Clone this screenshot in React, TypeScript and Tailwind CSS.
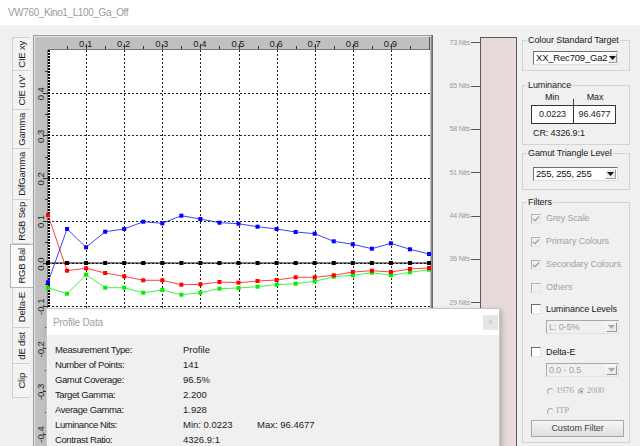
import React from "react";

const BLUE = [282.3, 229, 247.3, 231.7, 229, 221.7, 223.3, 215.7, 219, 222.7, 223.7, 226.7, 229, 232, 233.7, 241.3, 244.3, 248.7, 243.3, 249.3, 254];
const RED = [215, 270.7, 268.3, 273, 276.3, 280.3, 280.3, 284.7, 284.3, 282, 282.7, 281, 280, 277.3, 277.3, 275.3, 272, 270.7, 272, 269, 268];
const GREEN = [287.7, 293.7, 274.7, 287.7, 287.7, 292.7, 290, 294.7, 292.7, 288.7, 288, 286.7, 284.7, 283.7, 281.3, 276.7, 275.3, 272.7, 275.3, 272.3, 269.7];
const BLACK = Array.from({ length: 21 }, () => 263);

const X0 = 15;
const XS = 381;
const xOf = (v: number) => X0 + v * XS;
const yOf = (v: number) => 228.1 - v * 426;
const cr = (n: number) => Math.round(n) + 0.5;

function Chart() {
  const series: [number[], string][] = [
    [BLACK, "#000000"],
    [GREEN, "#00f000"],
    [RED, "#ff0000"],
    [BLUE, "#0000ff"],
  ];
  const hVals = [0.4, 0.3, 0.2, 0.1, 0, -0.1, -0.2, -0.3, -0.4];
  const leftTicks = Array.from({ length: 18 }, (_, i) => 0.45 - i * 0.05);
  return (
    <svg width={400} height={411} className="block shrink-0" style={{ fontFamily: '"Liberation Sans", Arial, sans-serif' }}>
      <rect x={0} y={0} width={400} height={411} fill="#c0c0c0" />
      <line x1={0.5} y1={0} x2={0.5} y2={411} stroke="#9a9a9a" />
      <line x1={0} y1={0.5} x2={400} y2={0.5} stroke="#9a9a9a" />
      <line x1={1.5} y1={1} x2={1.5} y2={411} stroke="#e6e6e6" />
      <line x1={1} y1={1.5} x2={400} y2={1.5} stroke="#e6e6e6" />
      <rect x={15} y={15} width={382} height={396} fill="#ffffff" />
      <line x1={15} y1={14.5} x2={397} y2={14.5} stroke="#7a7a7a" />
      <line x1={14.5} y1={15} x2={14.5} y2={411} stroke="#7a7a7a" />
      <line x1={396.5} y1={2} x2={396.5} y2={15} stroke="#555" />
      <line x1={398.5} y1={0} x2={398.5} y2={411} stroke="#8a8a8a" />
      <line x1={399.5} y1={0} x2={399.5} y2={411} stroke="#6a6a6a" />

      {Array.from({ length: 19 }, (_, k) => {
        const i = k + 1;
        const x = cr(xOf(i * 0.05));
        const major = i % 2 === 0;
        return <line key={"tt" + i} x1={x} y1={major ? 9 : 11} x2={x} y2={14} stroke="#333" />;
      })}
      {Array.from({ length: 9 }, (_, k) => (
        <text key={"tl" + k} x={xOf((k + 1) / 10) - 0.5} y={12} fontSize={9.5} fill="#222" textAnchor="middle">
          {"0." + (k + 1)}
        </text>
      ))}

      {leftTicks.map((v, i) => {
        const y = cr(yOf(v));
        const major = Math.round(v * 100) % 10 === 0;
        return <line key={"lt" + i} x1={major ? 10 : 12} y1={y} x2={15} y2={y} stroke="#333" />;
      })}
      {hVals.map((v) => (
        <text
          key={"ll" + v}
          transform={`translate(8, ${yOf(v) + 1}) rotate(-90)`}
          fontSize={9.5}
          fill="#222"
          textAnchor="middle"
          dy="0.35em"
        >
          {v.toFixed(1)}
        </text>
      ))}

      {Array.from({ length: 9 }, (_, k) => {
        const x = cr(xOf((k + 1) / 10));
        return <line key={"vg" + k} x1={x} y1={15} x2={x} y2={411} stroke="#222" strokeDasharray="2 2" shapeRendering="crispEdges" />;
      })}
      {hVals.map((v) => {
        const y = cr(yOf(v));
        return <line key={"hg" + v} x1={15} y1={y} x2={397} y2={y} stroke="#222" strokeDasharray="2 2" shapeRendering="crispEdges" />;
      })}
      <line x1={16} y1={15} x2={16} y2={411} stroke="#000" strokeWidth={2} strokeDasharray="2 1" shapeRendering="crispEdges" />

      {series.map(([data, color], si) => {
        const pts = data.map((sy, i) => [X0 + i * 19.05, sy - 35]);
        return (
          <g key={"s" + si}>
            <polyline points={pts.map((p) => p.join(",")).join(" ")} fill="none" stroke={color} strokeWidth={1} strokeOpacity={si === 0 ? 1 : 0.75} />
            {pts.map((p, i) => (
              <rect key={i} x={p[0] - 2} y={p[1] - 2} width={4} height={4} fill={color} />
            ))}
          </g>
        );
      })}
    </svg>
  );
}

function Nits() {
  const vals = [73, 65, 58, 51, 44, 36, 29, 22, 15, 7];
  return (
    <svg width={84} height={411} className="block shrink-0" style={{ fontFamily: '"Liberation Sans", Arial, sans-serif' }}>
      {vals.map((v, k) => {
        const y = 7.3 + 43.3 * k;
        return (
          <g key={v}>
            <text x={37} y={y} fontSize={7} fill="#9a9a9a" textAnchor="end" dy="0.35em" letterSpacing={-0.2}>
              {v} Nits
            </text>
            <line x1={38} y1={cr(y)} x2={47} y2={cr(y)} stroke="#555" />
          </g>
        );
      })}
      <rect x={47.5} y={2.5} width={36} height={420} fill="#e8dada" stroke="#5a5a5a" />
    </svg>
  );
}

const TABS: { label: string; h: string; sel?: boolean; top?: boolean }[] = [
  { label: "CIE xy", h: "h-[34px]", top: true },
  { label: "CIE u'v'", h: "h-[39px]" },
  { label: "Gamma", h: "h-[39px]" },
  { label: "DifGamma", h: "h-[51px]" },
  { label: "RGB Sep", h: "h-[44px]" },
  { label: "RGB Bal", h: "h-[44px]", sel: true },
  { label: "Delta-E", h: "h-[40px]" },
  { label: "dE dist", h: "h-[36px]" },
  { label: "Clip", h: "h-[34px]" },
];

function Tabs() {
  return (
    <div className="flex w-[33px] shrink-0 flex-col pt-[12px]">
      {TABS.map((t) => (
        <div
          key={t.label}
          className={
            t.sel
              ? `${t.h} ml-[10px] flex w-[23px] items-center justify-center border border-r-0 border-[#b4b4b4] bg-[#fbfbfb]`
              : `${t.h} ml-[12px] flex w-[18px] items-center justify-center border-b border-l border-[#cfcfcf] bg-[#f4f4f4] ${t.top ? "border-t" : ""}`
          }
        >
          <span className="rotate-180 whitespace-nowrap text-[9.5px] leading-none tracking-[-0.2px] text-[#1a1a1a] [writing-mode:vertical-rl]">
            {t.label}
          </span>
        </div>
      ))}
    </div>
  );
}

function Arrow({ color }: { color: string }) {
  return (
    <svg width="7" height="4" viewBox="0 0 7 4">
      <path d="M0 0 H7 L3.5 4 Z" fill={color} />
    </svg>
  );
}

function Select({ text, disabled, w }: { text: string; disabled?: boolean; w: string }) {
  return (
    <div
      className={
        disabled
          ? `${w} flex h-[14px] border border-[#a8a8a8] border-b-[#e2e2e2] border-r-[#e2e2e2] bg-[#f0f0f0]`
          : `${w} flex h-[14px] border border-[#6f6f6f] border-b-[#dedede] border-r-[#dedede] bg-white`
      }
    >
      <span className={disabled ? "flex-1 pl-[2px] text-[9px] leading-[12px] text-[#a0a0a0]" : "flex-1 pl-[2px] text-[9.5px] leading-[12px] tracking-[-0.2px] text-[#111]"}>
        {text}
      </span>
      <span className="m-[1px] flex w-[11px] items-center justify-center border border-[#ffffff] border-b-[#9a9a9a] border-r-[#9a9a9a] bg-[#ececec]">
        <Arrow color={disabled ? "#a8a8a8" : "#111"} />
      </span>
    </div>
  );
}

function Check({ checked, disabled }: { checked?: boolean; disabled?: boolean }) {
  return (
    <span
      className={
        disabled
          ? "flex h-[10px] w-[10px] shrink-0 items-center justify-center border border-[#b2b2b2] border-b-[#e6e6e6] border-r-[#e6e6e6] bg-[#f0f0f0]"
          : "flex h-[10px] w-[10px] shrink-0 items-center justify-center border border-[#6a6a6a] border-b-[#e6e6e6] border-r-[#e6e6e6] bg-white"
      }
    >
      {checked && (
        <svg width="8" height="8" viewBox="0 0 8 8">
          <path d="M1 3.8 L3 5.8 L7 1.6" stroke={disabled ? "#a4a4a4" : "#222"} strokeWidth="1.4" fill="none" />
        </svg>
      )}
    </span>
  );
}

function Radio({ on }: { on?: boolean }) {
  return (
    <span className="flex h-[7px] w-[7px] shrink-0 items-center justify-center rounded-full border border-[#a8a8a8] border-b-[#e4e4e4] border-r-[#e4e4e4] bg-[#f0f0f0]">
      {on && <span className="h-[3px] w-[3px] rounded-full bg-[#9c9c9c]" />}
    </span>
  );
}

function CheckRow({ label, checked, disabled, h }: { label: string; checked?: boolean; disabled?: boolean; h: string }) {
  return (
    <div className={`${h} flex items-center gap-[5px]`}>
      <Check checked={checked} disabled={disabled} />
      <span className={disabled ? "text-[9px] leading-none text-[#a2a2a2]" : "text-[9px] leading-none text-[#1a1a1a]"}>{label}</span>
    </div>
  );
}

function RightPanel() {
  return (
    <div className="flex w-[123px] shrink-0 flex-col pl-[5px] pt-[9px] text-[9px] tracking-[-0.1px]">
      <fieldset className="w-[108px] border border-[#d3d3d3] p-0">
        <legend className="ml-[4px] px-[1px] text-[9px] leading-[12px] text-[#1a1a1a]">Colour Standard Target</legend>
        <div className="pb-[5px] pl-[10px] pt-[5px]">
          <Select text="XX_Rec709_Ga2" w="w-[85px]" />
        </div>
      </fieldset>

      <fieldset className="mt-[8px] w-[108px] border border-[#d3d3d3] p-0">
        <legend className="ml-[4px] px-[1px] text-[9px] leading-[12px] text-[#1a1a1a]">Luminance</legend>
        <div className="pb-[5px] pl-[8px]">
          <div className="flex h-[14px] w-[85px] items-end">
            <span className="flex h-[14px] flex-1 items-center justify-center text-[#1a1a1a]">Min</span>
            <span className="h-[6px] w-[1px] bg-[#444]" />
            <span className="flex h-[14px] flex-1 items-center justify-center text-[#1a1a1a]">Max</span>
          </div>
          <div className="flex h-[19px] w-[85px] border border-[#333] bg-white">
            <span className="flex w-[42px] items-center justify-center border-r border-[#333] text-[#1a1a1a]">0.0223</span>
            <span className="flex flex-1 items-center justify-center text-[#1a1a1a]">96.4677</span>
          </div>
          <div className="mt-[3px] h-[12px] pl-[2px] leading-[12px] text-[#1a1a1a]">CR: 4326.9:1</div>
        </div>
      </fieldset>

      <fieldset className="mt-[2px] w-[108px] border border-[#d3d3d3] p-0">
        <legend className="ml-[4px] px-[1px] text-[9px] leading-[12px] text-[#1a1a1a]">Gamut Triangle Level</legend>
        <div className="pb-[8px] pl-[10px] pt-[8px]">
          <Select text="255, 255, 255" w="w-[85px]" />
        </div>
      </fieldset>

      <fieldset className="mt-[6px] w-[108px] border border-[#d3d3d3] p-0">
        <legend className="ml-[4px] px-[1px] text-[9px] leading-[12px] text-[#1a1a1a]">Filters</legend>
        <div className="-mt-[1px] flex flex-col pb-[5px] pl-[8px]">
          <CheckRow label="Grey Scale" checked disabled h="h-[23px]" />
          <CheckRow label="Primary Colours" checked disabled h="h-[23px]" />
          <CheckRow label="Secondary Colours" checked disabled h="h-[23px]" />
          <CheckRow label="Others" disabled h="h-[23px]" />
          <CheckRow label="Luminance Levels" h="h-[20px]" />
          <div className="ml-[15px] mt-[1px]">
            <Select text="L:   0-5%" disabled w="w-[73px]" />
          </div>
          <div className="mt-[8px]">
            <CheckRow label="Delta-E" h="h-[20px]" />
          </div>
          <div className="ml-[15px] mt-[1px]">
            <Select text="0.0 - 0.5" disabled w="w-[73px]" />
          </div>
          <div className="ml-[16px] mt-[7px] flex h-[14px] items-center font-['Liberation_Serif',serif] text-[9px] text-[#a4a4a4]">
            <Radio />
            <span className="ml-[2px]">1976</span>
            <span className="ml-[4px]">
              <Radio on />
            </span>
            <span className="ml-[2px]">2000</span>
          </div>
          <div className="ml-[16px] mt-[6px] flex h-[14px] items-center font-['Liberation_Serif',serif] text-[9px] text-[#a4a4a4]">
            <Radio />
            <span className="ml-[2px]">ITP</span>
          </div>
          <div className="mt-[2px] flex h-[17px] w-[93px] items-center justify-center border border-[#a9a9a9] bg-gradient-to-b from-[#f7f7f7] to-[#dedede] text-[9px] text-[#444]">
            Custom Filter
          </div>
        </div>
      </fieldset>
    </div>
  );
}

function ProfileDialog() {
  const rows: [string, string, string?][] = [
    ["Measurement Type:", "Profile"],
    ["Number of Points:", "141"],
    ["Gamut Coverage:", "96.5%"],
    ["Target Gamma:", "2.200"],
    ["Average Gamma:", "1.928"],
    ["Luminance Nits:", "Min: 0.0223", "Max: 96.4677"],
    ["Contrast Ratio:", "4326.9:1"],
  ];
  return (
    <div className="absolute left-[46px] top-[308px] h-[150px] w-[454px] border border-[#c8c8c8] bg-[#f0f0f0] shadow-[2px_2px_5px_rgba(0,0,0,0.22)]">
      <div className="flex h-[26px] items-center justify-between bg-white pl-[6px] pr-[1px]">
        <span className="text-[10px] tracking-[-0.2px] text-[#a0a0a0]">Profile Data</span>
        <span className="flex h-[15px] w-[15px] items-center justify-center bg-[#e6e6e6] text-[9px] leading-none text-[#c2c2c2]">×</span>
      </div>
      <div className="pl-[8px] pt-[7px] text-[9.5px] leading-[15px] tracking-[-0.4px] text-[#1a1a1a]">
        {rows.map(([a, b, c]) => (
          <div key={a} className="grid h-[15px] grid-cols-[128px_74px_auto]">
            <span>{a}</span>
            <span className="tracking-[0px]">{b}</span>
            {c ? <span className="tracking-[0px]">{c}</span> : <span />}
          </div>
        ))}
      </div>
    </div>
  );
}

export default function App() {
  return (
    <div className="relative h-[446px] w-[640px] overflow-hidden bg-[#f0f0f0] font-['Liberation_Sans',Arial,sans-serif] text-[#1a1a1a]">
      <div className="flex h-[25px] items-center bg-white pl-[8px] text-[10px] tracking-[-0.4px] text-[#9a9a9a]">
        VW760_Kino1_L100_Ga_Off
      </div>
      <div className="flex h-[421px]">
        <Tabs />
        <div className="mt-[10px]">
          <Chart />
        </div>
        <div className="mt-[10px]">
          <Nits />
        </div>
        <RightPanel />
      </div>
      <ProfileDialog />
    </div>
  );
}
